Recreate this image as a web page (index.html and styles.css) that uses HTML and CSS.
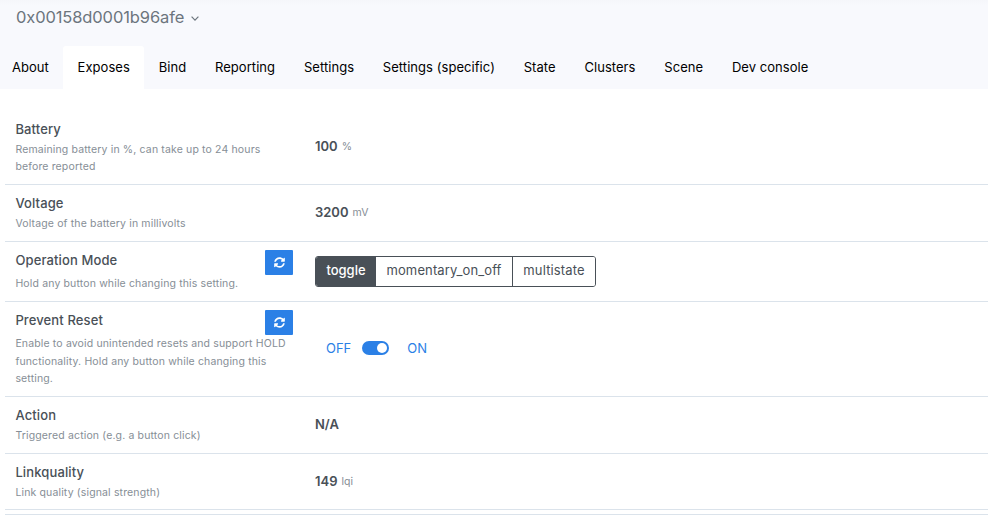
FILE: index.html
```html
<!DOCTYPE html>
<html lang="en">
<head>
<meta charset="utf-8">
<title>0x00158d0001b96afe</title>
<link rel="stylesheet" href="styles.css">
</head>
<body>
<svg class="sprite" aria-hidden="true">
  <symbol id="sync" viewBox="0 0 512 512"><path fill="currentColor" d="M370.7 133.3C339.5 104 298.9 88 255.8 88c-77.5.1-144.3 53.2-162.8 126.9-1.3 5.4-6.1 9.1-11.7 9.1H24.1c-7.500 0-13.200-6.800-11.800-14.200C33.900 94.900 134.800 8 256 8c66.400 0 126.800 26.100 171.300 68.700L463 41c15.100-15.100 41-4.400 41 17v134c0 13.300-10.700 24-24 24H346c-21.400 0-32.100-25.900-17-41l41.700-41.700zM32 296h134c21.400 0 32.100 25.900 17 41l-41.800 41.800c31.300 29.300 71.800 45.300 114.900 45.300 77.400-.1 144.300-53.100 162.800-126.800 1.300-5.400 6.100-9.100 11.700-9.100h57.300c7.500 0 13.200 6.800 11.800 14.200C478.100 417.100 377.200 504 256 504c-66.400 0-126.800-26.100-171.300-68.700L49 471c-15.100 15.100-41 4.400-41-17V320c0-13.300 10.700-24 24-24z"/></symbol>
</svg>
<header class="header">
  <button class="device">0x00158d0001b96afe
    <svg class="chevron" viewBox="0 0 8 5"><path d="M.6.7 4 4.100 7.400.7" fill="none" stroke="currentColor" stroke-width="1.200"/></svg>
  </button>
  <nav class="tabs">
    <a class="tab">About</a>
    <a class="tab active">Exposes</a>
    <a class="tab">Bind</a>
    <a class="tab">Reporting</a>
    <a class="tab">Settings</a>
    <a class="tab">Settings (specific)</a>
    <a class="tab">State</a>
    <a class="tab">Clusters</a>
    <a class="tab">Scene</a>
    <a class="tab">Dev console</a>
  </nav>
</header>
<main class="exposes">
  <section class="row battery">
    <div class="info"><h2 class="name">Battery</h2><p class="desc">Remaining battery in %, can take up to 24 hours<br>before reported</p></div>
    <div class="value"><strong>100</strong> <small>%</small></div>
  </section>
  <section class="row">
    <div class="info"><h2 class="name">Voltage</h2><p class="desc">Voltage of the battery in millivolts</p></div>
    <div class="value"><strong>3200</strong> <small>mV</small></div>
  </section>
  <section class="row refreshable mode">
    <div class="info"><div class="heading"><h2 class="name">Operation Mode</h2><button class="refresh" aria-label="Refresh"><svg><use href="#sync"/></svg></button></div><p class="desc">Hold any button while changing this setting.</p></div>
    <div class="value"><div class="group"><button class="option selected">toggle</button><button class="option momentary">momentary_on_off</button><button class="option multi">multistate</button></div></div>
  </section>
  <section class="row refreshable reset">
    <div class="info"><div class="heading"><h2 class="name">Prevent Reset</h2><button class="refresh" aria-label="Refresh"><svg><use href="#sync"/></svg></button></div><p class="desc">Enable to avoid unintended resets and support HOLD<br>functionality. Hold any button while changing this<br>setting.</p></div>
    <div class="value toggle"><span>OFF</span><span class="switch"></span><span>ON</span></div>
  </section>
  <section class="row">
    <div class="info"><h2 class="name">Action</h2><p class="desc">Triggered action (e.g. a button click)</p></div>
    <div class="value"><strong class="na">N/A</strong></div>
  </section>
  <section class="row last">
    <div class="info"><h2 class="name">Linkquality</h2><p class="desc">Link quality (signal strength)</p></div>
    <div class="value"><strong>149</strong> <small>lqi</small></div>
  </section>
  <div class="end"></div>
</main>
</body>
</html>
```
FILE: styles.css
```css
* { box-sizing: border-box; }
body {
  margin: 0;
  background: #fff;
  color: #495057;
  font-family: Inter, "Liberation Sans", sans-serif;
  font-size: 13px;
}
button { font: inherit; margin: 0; border: 0; }
.sprite { display: none; }

.header {
  display: flex;
  flex-direction: column;
  justify-content: space-between;
  height: 89px;
  background: linear-gradient(#f5f6fa, #f8f9fd 6px);
}
.device {
  display: flex;
  align-items: center;
  gap: 7px;
  height: 34px;
  padding: 0 16px;
  background: none;
  color: #6c757d;
  font-size: 16.5px;
  letter-spacing: -.12px;
}
.chevron { width: 8px; height: 5px; margin-top: 2px; }
.tabs { display: flex; height: 43px; padding-left: 63px; margin-left: -65.500px; }
.tab {
  padding: 0 14.400px;
  color: #000;
  line-height: 43px;
  letter-spacing: .05px;
  white-space: nowrap;
}
.tab.active { background: #fff; border-radius: 3px 3px 0 0; }

.exposes { padding: 22px 0 0 5px; }
.row {
  display: flex;
  height: 57px;
  padding: 8px 10px 0;
  border-bottom: 1px solid #dbe3eb;
}
.battery { height: 74px; }
.mode { height: 60px; }
.reset { height: 95px; }
.last { height: 56px; }
.end { height: 5px; border-bottom: 1px solid #dbe3eb; }
.info { width: 300px; flex: none; padding-left: .4px; }
.name { margin: 0; font-size: 13px; font-weight: 550; line-height: 20px; letter-spacing: .12px; }
.desc {
  margin: 2px 0 0;
  color: #868e96;
  font-size: 10.500px;
  line-height: 17.500px;
  letter-spacing: .145px;
  white-space: nowrap;
}
.battery .desc { line-height: 17px; }
.heading { display: flex; justify-content: space-between; height: 25px; padding-right: 22px; }
.refreshable .desc { margin-top: 0; }
.refresh {
  display: grid;
  place-items: center;
  width: 28px;
  height: 25px;
  padding: 0;
  background: #2b80e6;
  color: #fff;
  border-radius: 1px;
}
.refresh svg { width: 11px; height: 11px; }
.value { display: flex; align-items: center; gap: 4px; padding-bottom: 10px; }
.battery .value { padding-bottom: 11px; }
.mode .value { padding-bottom: 8px; }
.value strong { font-weight: 570; }
.value small { color: #868e96; font-size: 10.500px; padding-top: 1px; }
.group {
  display: flex;
  height: 31px;
  border: 1px solid #495057;
  border-radius: 3px;
  overflow: hidden;
}
.option { background: #fff; color: #495057; padding: 0 0 2px; line-height: 27px; width: 60px; letter-spacing: .13px; }
.option + .option { border-left: 1px solid #495057; }
.option.selected { background: #495057; color: #fff; font-weight: 550; letter-spacing: 0; }
.option.momentary { width: 136px; border-left: 0; }
.option.multi { width: 83px; }
.toggle { gap: 0; padding-left: 11px; color: #2b80e6; }
.switch {
  display: flex;
  justify-content: flex-end;
  width: 27px;
  height: 14px;
  margin: 0 18px 0 11px;
  padding: 2px;
  border-radius: 7px;
  background: #2b80e6;
}
.switch::after { content: ""; width: 10px; height: 10px; border-radius: 50%; background: #fff; }
```
